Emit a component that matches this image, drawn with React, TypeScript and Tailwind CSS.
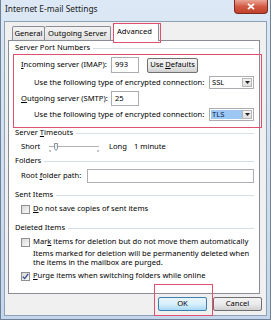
import React from 'react';

function Header({label, className}: {label: React.ReactNode, className: string}) {
  return (
    <div className={`${className} flex items-center h-[10px] pl-[6px] pr-[5px] gap-[3px]`}>
      <span className="whitespace-nowrap">{label}</span>
      <div className="flex-1 h-px bg-[#d5dfe5]"/>
    </div>
  );
}

function Check({checked}: {checked?: boolean}) {
  return (
    <span className="w-[9px] h-[9px] border border-[#8e8f8f] bg-gradient-to-br from-[#d8d8d8] to-[#fafafa] flex items-center justify-center shrink-0">
      {checked && (
        <svg width="7" height="7" viewBox="0 0 7 7">
          <path d="M0.8 3.6 L2.7 5.6 L6.2 0.8" stroke="#2c4a8c" strokeWidth="1.3" fill="none"/>
        </svg>
      )}
    </span>
  );
}

function Combo({value, selected}: {value: string, selected?: boolean}) {
  return (
    <div className="w-[45px] h-[13px] shrink-0 border border-[#abadb3] bg-white flex p-px">
      <span className={`flex-1 flex items-center pl-px ${selected ? 'bg-[#9dc7f3] text-[#0b2150]' : ''}`}>{value}</span>
      <span className="w-[10px] border border-[#b6b6b6] bg-gradient-to-b from-[#f4f4f4] to-[#dedede] flex items-center justify-center">
        <svg width="5" height="3" viewBox="0 0 5 3"><path d="M0 0 H5 L2.5 3 Z" fill="#222"/></svg>
      </span>
    </div>
  );
}

function Btn({children, primary, className}: {children: React.ReactNode, primary?: boolean, className: string}) {
  return (
    <div
      className={`${className} rounded-[2px] border flex items-center justify-center ${primary
        ? 'border-[#3c7fb1] bg-gradient-to-b from-[#eaf6fd] via-[#d9f0fc] to-[#a7d9f5]'
        : 'border-[#707070] bg-gradient-to-b from-[#f2f2f2] via-[#ebebeb] to-[#d0d0d0]'}`}>
      {children}
    </div>
  );
}

function Slider() {
  return (
    <svg width="52" height="10" viewBox="0 0 52 10">
      <line x1="0" y1="4.5" x2="50" y2="4.5" stroke="#b0b0b0" strokeWidth="1"/>
      <line x1="0" y1="5.5" x2="50" y2="5.5" stroke="#ffffff" strokeWidth="1"/>
      <path d="M5.5 1.5 H8.5 V6.5 L7 8.5 L5.5 6.5 Z" fill="#eef1f5" stroke="#6d7a8a" strokeWidth="0.8"/>
      <line x1="1" y1="8" x2="1" y2="10" stroke="#8a8a8a"/>
      <line x1="49" y1="8" x2="49" y2="10" stroke="#8a8a8a"/>
    </svg>
  );
}

export default function App() {
  return (
    <div className="w-[271px] h-[320px] overflow-hidden bg-gradient-to-b from-[#dce8f5] to-[#c4d6eb] border-x border-b border-[#6f8196] flex flex-col font-['Noto_Sans','DejaVu_Sans',sans-serif] text-[7.6px] leading-none text-black">
      {/* title bar */}
      <div className="h-[21px] flex items-start justify-between shrink-0">
        <span className="pl-[4px] pt-[5px] text-[8.4px] text-[#1b1b1b]">Internet E-mail Settings</span>
        <div className="mr-[2px] w-[34px] h-[14px] rounded-b-[4px] border border-t-0 border-[#7d2a1f] bg-gradient-to-b from-[#e9a596] via-[#d25a44] to-[#c0402c] flex items-center justify-center">
          <svg width="8" height="7" viewBox="0 0 8 7">
            <path d="M1 0.8 L7 6.2 M7 0.8 L1 6.2" stroke="#ffffff" strokeWidth="1.8"/>
          </svg>
        </div>
      </div>

      {/* client */}
      <div className="flex-1 mx-[3px] mb-[3px] bg-[#f0f0f0] border border-[#8da0b6] flex flex-col">
        {/* tabs */}
        <div className="h-[18px] ml-[4px] flex items-end pl-[3px] relative z-10">
          <div className="h-[14px] w-[33px] border border-b-0 border-[#898c95] rounded-t-[2px] bg-gradient-to-b from-[#f3f3f3] to-[#e2e2e2] flex items-center justify-center">General</div>
          <div className="h-[14px] w-[66px] border border-b-0 border-l-0 border-[#898c95] rounded-t-[2px] bg-gradient-to-b from-[#f3f3f3] to-[#e2e2e2] flex items-center justify-center">Outgoing Server</div>
          <div className="relative h-[18px] w-[46px] ml-[2px] mb-[-1px] border border-b-0 border-[#898c95] rounded-t-[2px] bg-white flex items-start pt-[4px] pl-[3px]">
            Advanced
            <div className="absolute left-[-1px] top-[-1px] w-[48px] h-[20px] border border-[#e0506e]"/>
          </div>
        </div>

        {/* panel */}
        <div className="ml-[3px] w-[252px] h-[254px] border border-[#898c95] bg-white flex flex-col">
          <Header className="mt-[2px]" label="Server Port Numbers"/>

          <div className="mt-px ml-[4px] mr-[-3px] h-[74px] border border-[#e0506e] flex flex-col">
            <div className="mt-[2px] h-[16px] flex items-center pl-[7px]">
              <span className="w-[90px] whitespace-nowrap"><u>I</u>ncoming server (IMAP):</span>
              <div className="w-[28px] h-[16px] border border-[#abadb3] bg-white flex items-center pl-[3px]">993</div>
              <Btn className="ml-[8px] w-[51px] h-[15px]">Use <u className="ml-[1.5px]">D</u>efaults</Btn>
            </div>
            <div className="mt-[3px] h-[13px] flex items-center justify-between pl-[20px] pr-[7px]">
              <span className="whitespace-nowrap">Use the following type of encrypted connection:</span>
              <Combo value="SSL"/>
            </div>
            <div className="mt-[2px] h-[15px] flex items-center pl-[7px]">
              <span className="w-[90px] whitespace-nowrap"><u>O</u>utgoing server (SMTP):</span>
              <div className="w-[28px] h-[15px] border border-[#abadb3] bg-white flex items-center pl-[3px]">25</div>
            </div>
            <div className="mt-[2px] h-[13px] flex items-center justify-between pl-[20px] pr-[7px]">
              <span className="whitespace-nowrap">Use the following type of encrypted connection:</span>
              <Combo value="TLS" selected/>
            </div>
          </div>

          <Header className="mt-0" label={<>Server <u>T</u>imeouts</>}/>
          <div className="mt-[4px] h-[10px] flex items-center pl-[12px]">
            <span className="w-[28px]">Short</span>
            <Slider/>
            <span className="ml-[8px] w-[25px]">Long</span>
            <span>1 minute</span>
          </div>

          <Header className="mt-[4px]" label="Folders"/>
          <div className="mt-[3px] h-[14px] flex items-center pl-[12px] pr-[5px]">
            <span className="w-[66px] whitespace-nowrap">Root <u>f</u>older path:</span>
            <div className="flex-1 h-[14px] border border-[#abadb3] bg-white"/>
          </div>

          <Header className="mt-[7px]" label="Sent Items"/>
          <div className="mt-[4px] h-[10px] flex items-center gap-[3px] pl-[12px]">
            <Check/>
            <span><u>D</u>o not save copies of sent items</span>
          </div>

          <Header className="mt-[9px]" label="Deleted Items"/>
          <div className="mt-[4px] h-[10px] flex items-center gap-[3px] pl-[12px]">
            <Check/>
            <span className="whitespace-nowrap">Mar<u>k</u> items for deletion but do not move them automatically</span>
          </div>
          <p className="mt-[2px] pl-[24px] pr-[6px] leading-[9px]">
            Items marked for deletion will be permanently deleted when the items in the mailbox are purged.
          </p>
          <div className="mt-[4px] h-[10px] flex items-center gap-[3px] pl-[12px]">
            <Check checked/>
            <span><u>P</u>urge items when switching folders while online</span>
          </div>
        </div>

        {/* buttons */}
        <div className="mt-[3px] flex justify-end gap-[6px] pr-[4px]">
          <div className="relative">
            <Btn primary className="w-[49px] h-[14px]">OK</Btn>
            <div className="absolute left-[-4px] top-[-13px] w-[59px] h-[32px] border border-[#e0506e]"/>
          </div>
          <Btn className="w-[49px] h-[14px]">Cancel</Btn>
        </div>
      </div>
    </div>
  );
}
